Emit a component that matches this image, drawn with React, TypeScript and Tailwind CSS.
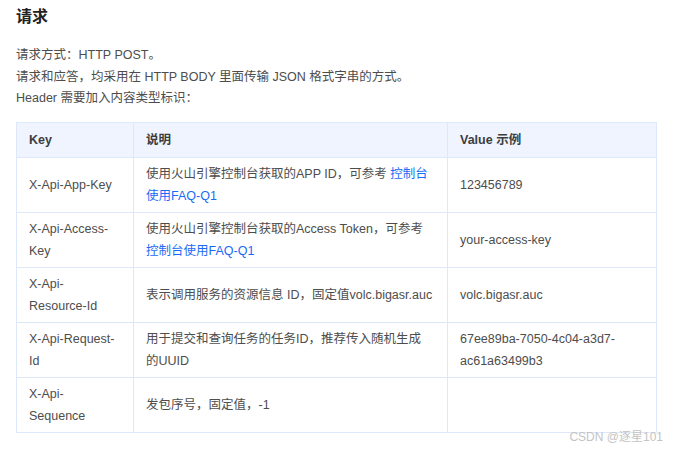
import React from "react";

const font = { fontFamily: '"Liberation Sans", Arial, "Noto Sans CJK SC", sans-serif' };

const Link = ({ children }: { children: React.ReactNode }) => (
  <span className="text-[#1a6bf4]">{children}</span>
);

const rows: { k: React.ReactNode; d: React.ReactNode; v: React.ReactNode }[] = [
  {
    k: "X-Api-App-Key",
    d: (
      <>
        使用火山引擎控制台获取的APP ID，可参考 <Link>控制台使用FAQ-Q1</Link>
      </>
    ),
    v: "123456789",
  },
  {
    k: "X-Api-Access-Key",
    d: (
      <>
        使用火山引擎控制台获取的Access Token，可参考 <Link>控制台使用FAQ-Q1</Link>
      </>
    ),
    v: "your-access-key",
  },
  {
    k: "X-Api-Resource-Id",
    d: "表示调用服务的资源信息 ID，固定值volc.bigasr.auc",
    v: "volc.bigasr.auc",
  },
  {
    k: "X-Api-Request-Id",
    d: (
      <>
        用于提交和查询任务的任务ID，推荐传入随机生成
        <br />
        的UUID
      </>
    ),
    v: "67ee89ba-7050-4c04-a3d7-ac61a63499b3",
  },
  {
    k: "X-Api-Sequence",
    d: "发包序号，固定值，-1",
    v: "",
  },
];

export default function App() {
  return (
    <div className="relative w-[676px] h-[451px] bg-white text-[#4d4d4d]" style={font}>
      <div className="pl-4 pr-5">
        <h3 className="pt-[5px] text-[16px] leading-[24px] font-bold text-[#222]">请求</h3>
        <div className="mt-[16px] text-[12.5px] leading-[21.5px]">
          <p>请求方式：HTTP POST。</p>
          <p>请求和应答，均采用在 HTTP BODY 里面传输 JSON 格式字串的方式。</p>
          <p>Header 需要加入内容类型标识：</p>
        </div>
        <table className="mt-[12px] w-[640px] border-collapse table-fixed text-[12.5px] leading-[22px]">
          <colgroup>
            <col className="w-[117px]" />
            <col className="w-[314px]" />
            <col className="w-[209px]" />
          </colgroup>
          <thead>
            <tr className="bg-[#eff4ff] h-[35px]">
              <th className="border border-[#dde9fb] px-3 text-left font-bold text-[#3d3d3d]">Key</th>
              <th className="border border-[#dde9fb] px-3 text-left font-bold text-[#3d3d3d]">说明</th>
              <th className="border border-[#dde9fb] px-3 text-left font-bold text-[#3d3d3d]">Value 示例</th>
            </tr>
          </thead>
          <tbody>
            {rows.map((r, i) => (
              <tr key={i} className="h-[55px]">
                <td className="border border-[#dde9fb] pl-3 pr-[16px] py-[5px] align-middle break-words">{r.k}</td>
                <td className="border border-[#dde9fb] px-3 py-[5px] align-middle">{r.d}</td>
                <td className="border border-[#dde9fb] px-3 py-[5px] align-middle">{r.v}</td>
              </tr>
            ))}
          </tbody>
        </table>
      </div>
      <div className="absolute right-[13px] top-[428px] text-[12px] leading-[18px] text-[#c4c4c4]">
        CSDN @逐星101
      </div>
    </div>
  );
}
